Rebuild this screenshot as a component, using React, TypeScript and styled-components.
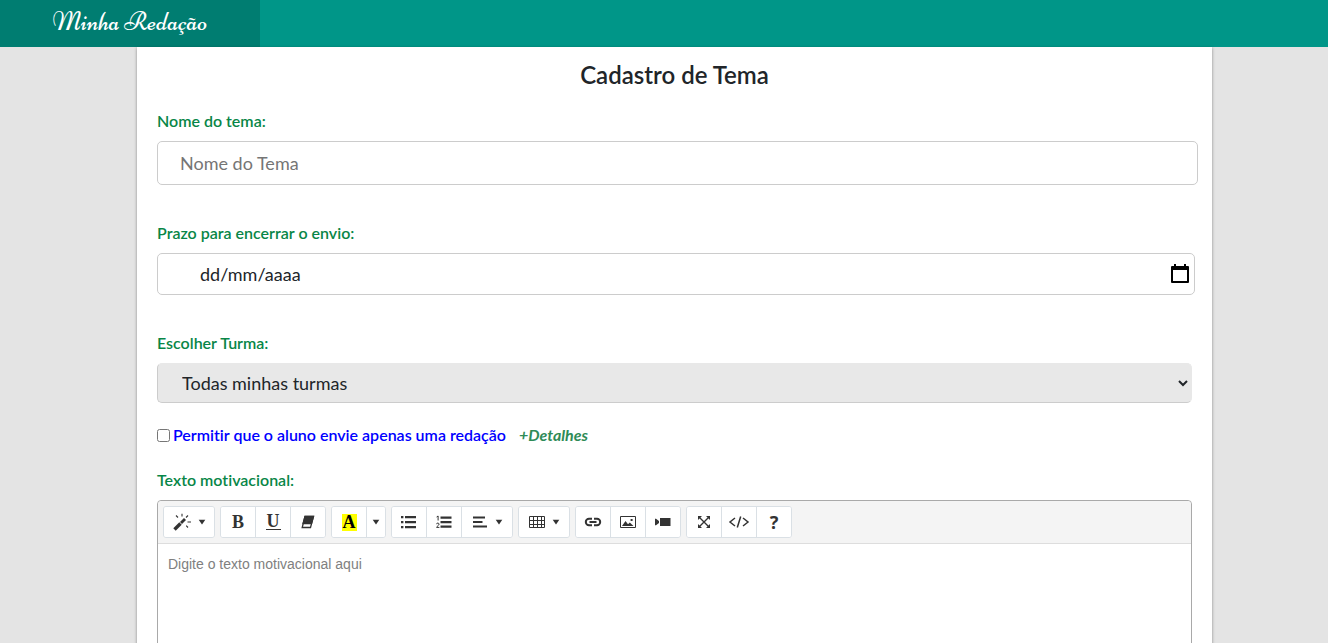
import React from 'react';
import styled, { createGlobalStyle } from 'styled-components';

const GlobalStyle = createGlobalStyle`
  *, *::before, *::after { box-sizing: border-box; }
  body {
    margin: 0;
    background: #e4e4e4;
    color: #212529;
    font-family: Lato, "Liberation Sans", sans-serif;
    font-size: 16px;
    line-height: 24px;
    font-variant-ligatures: none;
  }
`;

const Page = styled.div`
  display: flex;
  flex-direction: column;
  height: 100vh;
  overflow: hidden;
`;

const TopBar = styled.header`
  display: flex;
  flex: none;
  height: 47px;
  background: #009688;
`;

const Brand = styled.a`
  display: flex;
  align-items: center;
  justify-content: center;
  width: 260px;
  padding-bottom: 4px;
  background: #007d71;
  color: #fff;
  font-family: Niconne, cursive;
  font-size: 26px;
  font-weight: 400;
  text-decoration: none;
`;

const Card = styled.main`
  flex: 1 0 auto;
  margin: 0 116px 0 137px;
  padding: 12px 20px;
  background: #fff;
  box-shadow: 0 1px 3px rgba(0, 0, 0, 0.4);
`;

const Title = styled.h1`
  margin: 0 0 18px;
  font-size: 24px;
  font-weight: 600;
  line-height: 32px;
  text-align: center;
`;

const Field = styled.div<{ $gap: number }>`
  display: flex;
  flex-direction: column;
  margin-bottom: ${(p) => p.$gap}px;
`;

const Label = styled.label`
  margin-bottom: 8px;
  color: #088647;
  font-weight: 600;
  line-height: 24px;
`;

const TextInput = styled.input`
  width: calc(100% + 6px);
  height: 44px;
  padding: 0 22px;
  border: 1px solid #ccc;
  border-radius: 5px;
  background: #fff;
  font: 18px/24px Lato, sans-serif;
  &::placeholder { color: #757575; }
`;

const DateBox = styled.div`
  display: flex;
  align-items: center;
  width: calc(100% + 3px);
  height: 42px;
  padding-right: 3px;
  border: 1px solid #ccc;
  border-radius: 5px;
`;

const DateInput = styled.input`
  flex: 1;
  min-width: 0;
  height: 40px;
  padding: 0 0 0 42px;
  border: 0;
  background: transparent;
  font: 18px/24px Lato, sans-serif;
  &::placeholder { color: #212529; }
`;

const IconButton = styled.button`
  display: flex;
  padding: 0;
  border: 0;
  background: none;
  color: #000;
`;

const Select = styled.select`
  width: 100%;
  height: 40px;
  padding: 0 1px 0 20px;
  border: 1px solid #ccc;
  border-top-color: #e8e8e8;
  border-right-color: #e8e8e8;
  border-radius: 5px;
  background-color: #e8e8e8;
  color: #212529;
  font: 18px/24px Lato, sans-serif;
`;

const CheckRow = styled.div`
  display: flex;
  align-items: center;
  margin-bottom: 21px;
`;

const Checkbox = styled.input`
  width: 13px;
  height: 13px;
  margin: 0 3px 0 0;
`;

const CheckLabel = styled.label`
  color: #00f;
  font-weight: 600;
`;

const Details = styled.a`
  margin-left: 13px;
  color: #2e8b57;
  font-style: italic;
  font-weight: 700;
  text-decoration: none;
`;

const Editor = styled.section`
  border: 1px solid #a9a9a9;
  border-radius: 4px;
`;

const Toolbar = styled.div`
  display: flex;
  flex-wrap: wrap;
  gap: 5px;
  padding: 5px;
  border-bottom: 1px solid #ddd;
  border-radius: 4px 4px 0 0;
  background: #f4f4f4;
`;

const Group = styled.div`
  display: flex;
  height: 32px;
  border: 1px solid #dae0e5;
  border-radius: 3px;
  background: #fff;
  overflow: hidden;
`;

const Tool = styled.button<{ $width?: number }>`
  display: flex;
  box-sizing: content-box;
  align-items: center;
  justify-content: center;
  gap: 5px;
  width: ${(p) => p.$width ?? 34}px;
  padding: 0;
  border: 0;
  background: #fff;
  color: #333;
  & + & { border-left: 1px solid #dae0e5; }
`;

const Letter = styled.span<{ $underline?: boolean; $mark?: boolean }>`
  padding: 0 1px;
  border-bottom: ${(p) => (p.$underline ? '1px solid #333' : '0')};
  background: ${(p) => (p.$mark ? '#ff0' : 'transparent')};
  color: ${(p) => (p.$mark ? '#000' : '#333')};
  font: bold 18px/${(p) => (p.$underline ? 15 : 17)}px "Liberation Serif", serif;
`;

const Help = styled.span`
  font: bold 18px/20px "Noto Sans", sans-serif;
`;

const EditArea = styled.textarea`
  display: block;
  width: 100%;
  height: 300px;
  padding: 10px;
  border: 0;
  outline: 0;
  resize: none;
  font: 14px/20px "Liberation Sans", Arial, sans-serif;
  &::placeholder { color: #808080; }
`;

const Caret = () => (
  <svg width="8" height="6" viewBox="0 0 8 6"><path d="M.7.8h6.6L4 5.4z" fill="currentColor" /></svg>
);

const WandIcon = () => (
  <svg width="20" height="18" viewBox="0 0 20 18" fill="none" stroke="currentColor">
    <path d="M1.5 16.5l6-6" strokeWidth="3.4" />
    <path d="M8 10l4-4" strokeWidth="2.8" />
    <path d="M9 .8v2.8M3 2.5l2 2M15 2.5l-2 2M14.5 9H18M13.2 12.7l1.8 1.8" strokeWidth="1.1" />
  </svg>
);

const EraserIcon = () => (
  <svg width="14" height="14" viewBox="0 0 14 14" fill="none" stroke="currentColor" strokeWidth="1.3">
    <path d="M4 1.5h8.5l-3 11H1.2z" />
    <path d="M4 1.5h8.5l-2 7H2z" fill="currentColor" />
  </svg>
);

const ListIcon = () => (
  <svg width="16" height="14" viewBox="0 0 16 14" fill="currentColor">
    <path d="M4 1h11v2.2H4zM4 6h11v2.2H4zM4 11h11v2.2H4zM0 1h2.4v2.2H0zM0 6h2.4v2.2H0zM0 11h2.4v2.2H0z" />
  </svg>
);

const OrderedIcon = () => (
  <svg width="16" height="14" viewBox="0 0 16 14" fill="currentColor">
    <path d="M4.5 1.5h11v2.2h-11zM4.5 6h11v2.2h-11zM4.5 10.5h11v2.2h-11z" />
    <path d="M.6 2l1.5-1v4.5M.5 9.2c0-1.5 2.6-1.5 2.6 0 0 1-2.5 2.2-2.5 3.2h2.8" fill="none" stroke="currentColor" />
  </svg>
);

const AlignIcon = () => (
  <svg width="18" height="14" viewBox="0 0 18 14" fill="currentColor">
    <path d="M1 1.5h12v2H1zM1 6h9.5v2H1zM1 10.5h14v2H1z" />
  </svg>
);

const TableIcon = () => (
  <svg width="18" height="14" viewBox="0 0 18 14" fill="none" stroke="currentColor">
    <path d="M.5 1.5h15v11H.5zM.5 5.5h15M.5 9.5h15M4.5 1.5v11M8.5 1.5v11M12.5 1.5v11" />
  </svg>
);

const LinkIcon = () => (
  <svg width="18" height="16" viewBox="0 0 18 16" fill="none" stroke="currentColor" strokeWidth="2">
    <path d="M8 4.8H5a3.2 3.2 0 0 0 0 6.4h3M10 4.8h3a3.2 3.2 0 0 1 0 6.4h-3M5.5 8h7" />
  </svg>
);

const PictureIcon = () => (
  <svg width="18" height="16" viewBox="0 0 18 16" fill="currentColor">
    <path d="M1.5 2.5h15v11h-15z" fill="none" stroke="currentColor" />
    <path d="M3 12l3.5-5 2.5 3.3 1.8-1.7L14.5 12zM11.6 5h2v2h-2z" />
  </svg>
);

const VideoIcon = () => (
  <svg width="18" height="16" viewBox="0 0 18 16" fill="currentColor">
    <path d="M6 4h10.5v8H6zM1 4.8h1L5 7v2l-3 2.2H1z" />
  </svg>
);

const FullscreenIcon = () => (
  <svg width="14" height="14" viewBox="0 0 14 14" fill="currentColor">
    <path d="M2 2l10 10M12 2L2 12" stroke="currentColor" strokeWidth="1.4" />
    <path d="M1 1h4L1 5zM13 1v4L9 1zM1 13V9l4 4zM13 13H9l4-4z" />
  </svg>
);

const CodeIcon = () => (
  <svg width="22" height="16" viewBox="0 0 22 16" fill="none" stroke="currentColor" strokeWidth="1.5">
    <path d="M7 4L2 8l5 4M15 4l5 4-5 4M12.7 2.5l-3.4 11" />
  </svg>
);

const CalendarIcon = () => (
  <svg width="22" height="22" viewBox="0 0 22 22" fill="none" stroke="currentColor">
    <path d="M3 4h16v15H3z" strokeWidth="2" strokeLinejoin="round" />
    <path d="M3 5h16" strokeWidth="4" />
    <path d="M6 1v3M16 1v3" strokeWidth="2" />
  </svg>
);

export default function App() {
  return (
    <>
      <GlobalStyle />
      <Page>
        <TopBar><Brand href="#">Minha Redação</Brand></TopBar>
        <Card>
          <Title>Cadastro de Tema</Title>
          <Field $gap={36}>
            <Label htmlFor="nome">Nome do tema:</Label>
            <TextInput id="nome" placeholder="Nome do Tema" />
          </Field>
          <Field $gap={36}>
            <Label htmlFor="prazo">Prazo para encerrar o envio:</Label>
            <DateBox>
              <DateInput id="prazo" placeholder="dd/mm/aaaa" inputMode="numeric" />
              <IconButton type="button" aria-label="Abrir calendário"><CalendarIcon /></IconButton>
            </DateBox>
          </Field>
          <Field $gap={20}>
            <Label htmlFor="turma">Escolher Turma:</Label>
            <Select id="turma"><option>Todas minhas turmas</option></Select>
          </Field>
          <CheckRow>
            <Checkbox id="unica" type="checkbox" />
            <CheckLabel htmlFor="unica">Permitir que o aluno envie apenas uma redação</CheckLabel>
            <Details href="#">+Detalhes</Details>
          </CheckRow>
          <Field $gap={20}>
            <Label htmlFor="texto">Texto motivacional:</Label>
            <Editor>
              <Toolbar>
                <Group>
                  <Tool type="button" $width={50} aria-label="Estilo"><WandIcon /><Caret /></Tool>
                </Group>
                <Group>
                  <Tool type="button" aria-label="Negrito"><Letter>B</Letter></Tool>
                  <Tool type="button" aria-label="Sublinhado"><Letter $underline>U</Letter></Tool>
                  <Tool type="button" aria-label="Remover formatação"><EraserIcon /></Tool>
                </Group>
                <Group>
                  <Tool type="button" aria-label="Cor recente"><Letter $mark>A</Letter></Tool>
                  <Tool type="button" $width={18} aria-label="Mais cores"><Caret /></Tool>
                </Group>
                <Group>
                  <Tool type="button" aria-label="Lista com marcadores"><ListIcon /></Tool>
                  <Tool type="button" aria-label="Lista numerada"><OrderedIcon /></Tool>
                  <Tool type="button" $width={50} aria-label="Parágrafo"><AlignIcon /><Caret /></Tool>
                </Group>
                <Group>
                  <Tool type="button" $width={50} aria-label="Tabela"><TableIcon /><Caret /></Tool>
                </Group>
                <Group>
                  <Tool type="button" aria-label="Link"><LinkIcon /></Tool>
                  <Tool type="button" aria-label="Imagem"><PictureIcon /></Tool>
                  <Tool type="button" aria-label="Vídeo"><VideoIcon /></Tool>
                </Group>
                <Group>
                  <Tool type="button" aria-label="Tela cheia"><FullscreenIcon /></Tool>
                  <Tool type="button" aria-label="Código-fonte"><CodeIcon /></Tool>
                  <Tool type="button" aria-label="Ajuda"><Help>?</Help></Tool>
                </Group>
              </Toolbar>
              <EditArea id="texto" placeholder="Digite o texto motivacional aqui" />
            </Editor>
          </Field>
        </Card>
      </Page>
    </>
  );
}
